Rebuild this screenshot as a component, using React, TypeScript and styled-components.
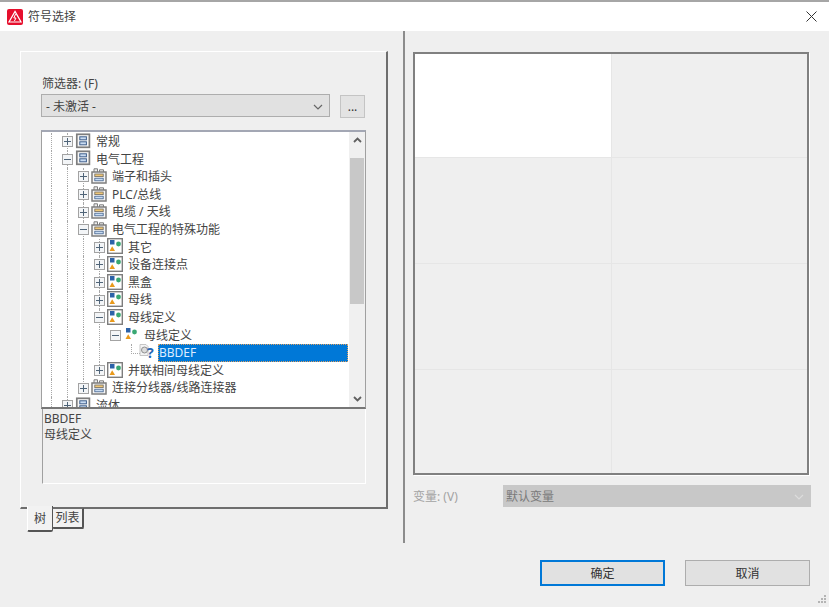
import React from 'react';

import styled, {createGlobalStyle} from 'styled-components';

const GlobalStyle = createGlobalStyle`
  html, body {
    margin: 0;
    background: #fff;
  }
  body {
    font-family: 'Noto Sans', 'Noto Sans CJK SC', sans-serif;
    font-size: 12px;
    color: #333;
  }
`;

const Dialog = styled.div`
  display: flex;
  flex-direction: column;
  width: 829px;
  height: 607px;
  overflow: hidden;
  background: #efefef;
`;

const TitleBar = styled.div`
  display: flex;
  align-items: center;
  flex: none;
  height: 29px;
  padding: 0 12px 0 7px;
  border-top: 2px solid #a6a6a6;
  background: #fff;
`;

const TitleText = styled.span`
  flex: 1;
  margin-left: 5px;
  line-height: 16px;
  color: #444;
`;

const Main = styled.div`
  display: flex;
  flex: none;
  height: 512px;
`;

const LeftPane = styled.div`
  flex: none;
  width: 403px;
  padding: 20px 0 0 20px;
  box-sizing: border-box;
`;

const Panel = styled.div`
  width: 368px;
  height: 458px;
  padding: 24px 0 0 20px;
  box-sizing: border-box;
  border-top: 1px solid #fff;
  border-left: 1px solid #fff;
  border-right: 2px solid #6e6e6e;
  border-bottom: 2px solid #6e6e6e;
`;

const FilterLabel = styled.div`
  height: 16px;
  margin: 0 0 2px 1px;
  line-height: 16px;
  color: #444;
`;

const FilterRow = styled.div`
  display: flex;
  gap: 10px;
  height: 24px;
`;

const Select = styled.div<{$disabled?: boolean}>`
  display: flex;
  align-items: center;
  justify-content: space-between;
  box-sizing: border-box;
  padding: 2px 6px 0 ${(props) => (props.$disabled ? '2px' : '4px')};
  background: ${(props) => (props.$disabled ? '#c8c8c8' : '#e1e1e1')};
  border: 1px solid ${(props) => (props.$disabled ? '#c8c8c8' : '#adadad')};
  color: ${(props) => (props.$disabled ? '#7a7a7a' : '#444')};
  line-height: 16px;
`;

const FilterSelect = styled(Select)`
  width: 289px;
  height: 23px;
`;

const BrowseButton = styled.div`
  width: 25px;
  height: 23px;
  margin-top: 1px;
  box-sizing: border-box;
  border: 1px solid #c4c4c4;
  background: #e3e3e3;
  text-align: center;
  line-height: 22px;
`;

const Tree = styled.div`
  display: flex;
  width: 325px;
  height: 279px;
  margin-top: 12px;
  box-sizing: border-box;
  background: #fff;
  border-top: 2px solid #a3a7b4;
  border-left: 1px solid #a0a0a0;
  border-right: 1px solid #a0a0a0;
  border-bottom: 2px solid #767676;
`;

const TreeRows = styled.div`
  flex: 1;
  min-width: 0;
  padding: 1px 0 0 1px;
  overflow: hidden;
`;

const Row = styled.div`
  display: flex;
  height: 17.6px;
  line-height: 17.6px;
  white-space: nowrap;
`;

const Cell = styled.div`
  position: relative;
  display: flex;
  align-items: center;
  justify-content: center;
  flex: none;
  width: 16px;
  height: 100%;
`;

const Guide = styled.div<{$short?: boolean}>`
  position: absolute;
  top: 0;
  left: 8px;
  height: ${(props) => (props.$short ? '50%' : '100%')};
  border-left: 1px dotted #a8a8a8;
`;

const Elbow = styled.div`
  position: absolute;
  top: 0;
  left: 8px;
  width: 8px;
  height: 50%;
  border-left: 1px dotted #a8a8a8;
  border-bottom: 1px dotted #a8a8a8;
`;

const ExpanderBox = styled.div`
  position: relative;
  display: flex;
  align-items: center;
  justify-content: center;
  width: 11px;
  height: 11px;
  box-sizing: border-box;
  border: 1px solid #a3a3a3;
  background: #f3f5f7;
`;

const ExpanderBar = styled.div<{$vertical?: boolean}>`
  position: absolute;
  background: #4f6478;
  ${(props) => (props.$vertical ? 'width: 1px; height: 7px;' : 'width: 7px; height: 1px;')}
`;

const RowLabel = styled.span`
  margin-left: 5px;
  color: #444;
`;

const SelectedLabel = styled.span`
  flex: 1;
  margin: 0 1px 0 3px;
  padding-left: 1px;
  box-sizing: border-box;
  background: #0078d7;
  outline: 1px dotted #e0a060;
  outline-offset: -1px;
  color: #dcecff;
`;

const ScrollBar = styled.div`
  display: flex;
  flex-direction: column;
  flex: none;
  width: 16px;
  background: #f0f0f0;
`;

const ScrollButton = styled.div<{$grow?: boolean}>`
  display: flex;
  align-items: ${(props) => (props.$grow ? 'flex-end' : 'flex-start')};
  justify-content: center;
  flex: ${(props) => (props.$grow ? 1 : 'none')};
  height: 26px;
  padding: 5px 0;
  box-sizing: border-box;
`;

const ScrollThumb = styled.div`
  flex: none;
  width: 14px;
  height: 146px;
  margin-left: 1px;
  background: #c8c8c8;
`;

const Description = styled.div`
  width: 324px;
  height: 75px;
  margin-left: 1px;
  padding: 2px 0 0 1px;
  box-sizing: border-box;
  border-left: 1px solid #a0a0a0;
  border-right: 1px solid #fff;
  border-bottom: 1px solid #fff;
  line-height: 16px;
  color: #444;
`;

const TabStrip = styled.div`
  position: relative;
  display: flex;
  align-items: flex-start;
  margin: -3px 0 0 7px;
`;

const Tab = styled.div<{$active?: boolean}>`
  box-sizing: border-box;
  text-align: center;
  line-height: 16px;
  color: #444;
  ${(props) =>
    props.$active
      ? `
    width: 26px;
    height: 26px;
    padding-top: 5px;
    background: #f2f2f2;
    border-left: 1px solid #fff;
    border-right: 1px solid #555;
    border-bottom: 2px solid #555;
    border-radius: 0 0 2px 2px;
  `
      : `
    width: 32px;
    height: 21px;
    margin: 2px 0 0 -1px;
    padding-top: 1px;
    background: #f2f2f2;
    border-top: 1px solid #6e6e6e;
    border-left: 1px solid #555;
    border-right: 2px solid #555;
    border-bottom: 2px solid #555;
    border-radius: 0 0 2px 2px;
  `}
`;

const RightPane = styled.div`
  flex: 1;
  padding: 21px 0 0 8px;
  box-sizing: border-box;
  border-left: 2px solid #8c8c8c;
`;

const Preview = styled.div`
  display: grid;
  grid-template-columns: 197px 1fr;
  grid-template-rows: 104px 106px 106px 1fr;
  width: 396px;
  height: 423px;
  box-sizing: border-box;
  border: 2px solid #808080;
  box-shadow: 1px 1px 0 #fff;
`;

const PreviewCell = styled.div<{$active?: boolean}>`
  box-sizing: border-box;
  border-right: 1px solid #e6e6e6;
  border-bottom: 1px solid #e6e6e6;
  background: ${(props) => (props.$active ? '#fff' : 'transparent')};

  &:nth-child(2n) {
    border-right: none;
  }
  &:nth-last-child(-n + 2) {
    border-bottom: none;
  }
`;

const VariantRow = styled.div`
  display: flex;
  align-items: center;
  height: 22px;
  margin-top: 10px;
`;

const VariantLabel = styled.div`
  flex: none;
  width: 90px;
  color: #a3a3a3;
`;

const VariantSelect = styled(Select)`
  width: 308px;
  height: 22px;
`;

const Footer = styled.div`
  display: flex;
  justify-content: flex-end;
  gap: 20px;
  padding: 17px 19px 0 0;
`;

const Button = styled.div<{$primary?: boolean}>`
  width: 125px;
  height: 26px;
  box-sizing: border-box;
  background: #e1e1e1;
  border: ${(props) => (props.$primary ? '2px solid #0078d7' : '1px solid #adadad')};
  text-align: center;
  line-height: ${(props) => (props.$primary ? '24px' : '26px')};
  color: #333;
`;

const Grip = styled.svg`
  position: absolute;
  right: 3px;
  bottom: 2px;
`;

const IconSvg = styled.svg`
  flex: none;
  margin-top: -2px;
  overflow: visible;
`;

const AppLogo = () => (
  <svg width="16" height="16" viewBox="0 0 16 16">
    <rect width="16" height="16" rx="2" fill="#e60f2d" />
    <path d="M8 2.4 14 13H2Z" fill="none" stroke="#fff" strokeWidth="1.2" />
    <path d="M8.6 5 6.8 9h2.2L7.4 12" fill="none" stroke="#fff" strokeWidth="1" />
  </svg>
);

const CloseIcon = () => (
  <svg width="11" height="11" viewBox="0 0 11 11">
    <path d="M.5.5l10 10M10.5.5l-10 10" stroke="#333" strokeWidth="1" fill="none" />
  </svg>
);

const Chevron = ({color}: {color: string}) => (
  <svg width="10" height="6" viewBox="0 0 10 6">
    <path d="M1 1l4 4 4-4" stroke={color} strokeWidth="1.2" fill="none" />
  </svg>
);

const ScrollChevron = ({up}: {up?: boolean}) => (
  <svg width="9" height="6" viewBox="0 0 9 6">
    <path d={up ? 'M1 5l3.5-3.5L8 5' : 'M1 1l3.5 3.5L8 1'} stroke="#606060" strokeWidth="1.8" fill="none" />
  </svg>
);

type IconKind = 'root' | 'group' | 'frame' | 'plain' | 'symbol';

const Shapes = () => (
  <>
    <rect x="3" y="2" width="4.5" height="4.5" fill="#2c62a8" />
    <circle cx="11.5" cy="6" r="2.4" fill="#3aa873" />
    <path d="M2.5 13 5.2 8.2 8 13Z" fill="#e99a1c" />
  </>
);

const TreeIcon = ({kind}: {kind: IconKind}) => {
  if (kind === 'root') {
    return (
      <IconSvg width="16" height="16" viewBox="0 0 16 16">
        <rect x="1.8" y="1.3" width="12.6" height="13" fill="#f6f6f6" stroke="#7e7e7e" strokeWidth="1.7" />
        <rect x="4.8" y="3.8" width="6.6" height="3" fill="#c9dcf2" stroke="#3f5f8c" strokeWidth="1" />
        <rect x="4.8" y="8.8" width="6.6" height="3" fill="#c9dcf2" stroke="#3f5f8c" strokeWidth="1" />
      </IconSvg>
    );
  }
  if (kind === 'group') {
    return (
      <IconSvg width="16" height="16" viewBox="0 0 16 16">
        <path d="M3 4V0.8h3.5V4M8.5 4V1.8h4V4" fill="#eee" stroke="#7e7e7e" strokeWidth="1" />
        <rect x="1" y="4" width="14" height="11" fill="#f6f6f6" stroke="#7e7e7e" strokeWidth="1.5" />
        <rect x="3.8" y="6" width="8.4" height="2.6" fill="#f0c878" stroke="#6f6a60" strokeWidth="0.8" />
        <rect x="3.8" y="10.2" width="8.4" height="2.6" fill="#c9dcf2" stroke="#3f5f8c" strokeWidth="0.8" />
      </IconSvg>
    );
  }
  if (kind === 'frame') {
    return (
      <IconSvg width="16" height="16" viewBox="0 0 16 16">
        <rect x="0.7" y="0.7" width="14.6" height="14.6" fill="#fff" stroke="#7d7d7d" strokeWidth="1.4" />
        <Shapes />
      </IconSvg>
    );
  }
  if (kind === 'plain') {
    return (
      <IconSvg width="16" height="16" viewBox="0 0 16 16">
        <Shapes />
      </IconSvg>
    );
  }
  return (
    <IconSvg width="16" height="16" viewBox="0 0 16 16">
      <path d="M1 0.5h6l2 2v9H1Z" fill="#f4f4f4" stroke="#c0c0c0" strokeWidth="0.9" />
      <circle cx="5.5" cy="6" r="3" fill="#dcdcdc" stroke="#8f8f8f" strokeWidth="1" />
      <text x="8" y="14" fontSize="14" fontWeight="700" fill="#2467b4">
        ?
      </text>
    </IconSvg>
  );
};

interface TreeNode {
  label: string;
  depth: number;
  icon: IconKind;
  open?: boolean;
}

const treeNodes: TreeNode[] = [
  {label: '常规', depth: 0, icon: 'root'},
  {label: '电气工程', depth: 0, icon: 'root', open: true},
  {label: '端子和插头', depth: 1, icon: 'group'},
  {label: 'PLC/总线', depth: 1, icon: 'group'},
  {label: '电缆 / 天线', depth: 1, icon: 'group'},
  {label: '电气工程的特殊功能', depth: 1, icon: 'group', open: true},
  {label: '其它', depth: 2, icon: 'frame'},
  {label: '设备连接点', depth: 2, icon: 'frame'},
  {label: '黑盒', depth: 2, icon: 'frame'},
  {label: '母线', depth: 2, icon: 'frame'},
  {label: '母线定义', depth: 2, icon: 'frame', open: true},
  {label: '母线定义', depth: 3, icon: 'plain', open: true},
  {label: 'BBDEF', depth: 4, icon: 'symbol'},
  {label: '并联相间母线定义', depth: 2, icon: 'frame'},
  {label: '连接分线器/线路连接器', depth: 1, icon: 'group'},
  {label: '流体', depth: 0, icon: 'root'},
];

// last row index that still shows a guide line in each indent column
const guideEnds = [15, 15, 14, 13];

const Expander = ({open}: {open?: boolean}) => (
  <ExpanderBox>
    <ExpanderBar />
    {!open && <ExpanderBar $vertical />}
  </ExpanderBox>
);

const TreeRow = ({node, index}: {node: TreeNode; index: number}) => {
  const isLeaf = node.depth === 4;
  const guideCount = isLeaf ? 4 : node.depth + 1;
  const guides = Array.from({length: Math.min(guideCount, 4)}, (_, i) => i);

  return (
    <Row>
      {guides.map((i) => (
        <Cell key={i}>{index <= guideEnds[i] && <Guide />}</Cell>
      ))}
      {isLeaf ? (
        <>
          <Cell />
          <Cell>
            <Elbow />
          </Cell>
        </>
      ) : (
        <Cell>
          {node.depth < 3 && <Guide $short={index === guideEnds[node.depth + 1]} />}
          <Expander open={node.open} />
        </Cell>
      )}
      <Cell>
        <TreeIcon kind={node.icon} />
      </Cell>
      {isLeaf ? <SelectedLabel>{node.label}</SelectedLabel> : <RowLabel>{node.label}</RowLabel>}
    </Row>
  );
};

const App = (): JSX.Element => {
  return (
    <Dialog>
      <GlobalStyle />
      <TitleBar>
        <AppLogo />
        <TitleText>符号选择</TitleText>
        <CloseIcon />
      </TitleBar>
      <Main>
        <LeftPane>
          <Panel>
            <FilterLabel>筛选器: (F)</FilterLabel>
            <FilterRow>
              <FilterSelect>
                <span>- 未激活 -</span>
                <Chevron color="#666" />
              </FilterSelect>
              <BrowseButton>...</BrowseButton>
            </FilterRow>
            <Tree>
              <TreeRows>
                {treeNodes.map((node, index) => (
                  <TreeRow key={index} node={node} index={index} />
                ))}
              </TreeRows>
              <ScrollBar>
                <ScrollButton>
                  <ScrollChevron up />
                </ScrollButton>
                <ScrollThumb />
                <ScrollButton $grow>
                  <ScrollChevron />
                </ScrollButton>
              </ScrollBar>
            </Tree>
            <Description>
              BBDEF
              <br />
              母线定义
            </Description>
          </Panel>
          <TabStrip>
            <Tab $active>树</Tab>
            <Tab>列表</Tab>
          </TabStrip>
        </LeftPane>
        <RightPane>
          <Preview>
            {Array.from({length: 8}, (_, i) => (
              <PreviewCell key={i} $active={i === 0} />
            ))}
          </Preview>
          <VariantRow>
            <VariantLabel>变量: (V)</VariantLabel>
            <VariantSelect $disabled>
              <span>默认变量</span>
              <Chevron color="#dcdcdc" />
            </VariantSelect>
          </VariantRow>
        </RightPane>
      </Main>
      <Footer>
        <Button $primary>确定</Button>
        <Button>取消</Button>
      </Footer>
      <Grip width="10" height="10" viewBox="0 0 10 10" fill="#b4b4b4">
        <rect x="7" y="0" width="2" height="2" />
        <rect x="4" y="3" width="2" height="2" />
        <rect x="7" y="3" width="2" height="2" />
        <rect x="1" y="6" width="2" height="2" />
        <rect x="4" y="6" width="2" height="2" />
        <rect x="7" y="6" width="2" height="2" />
      </Grip>
    </Dialog>
  );
};

export default App;
